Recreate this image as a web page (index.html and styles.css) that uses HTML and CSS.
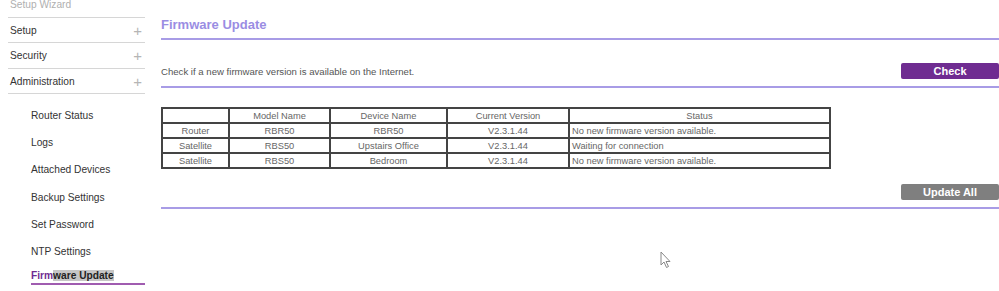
FILE: index.html
```html
<!DOCTYPE html>
<html lang="en">

<head>
    <meta charset="utf-8">
    <title>Firmware Update</title>
    <link rel="stylesheet" href="styles.css">
</head>

<body>
    <div class="side">
        <div class="menu wizard">Setup Wizard</div>
        <div class="menu">Setup <span class="plus">+</span></div>
        <div class="menu">Security <span class="plus">+</span></div>
        <div class="menu">Administration <span class="plus">+</span></div>
        <ul class="sub">
            <li>Router Status</li>
            <li>Logs</li>
            <li>Attached Devices</li>
            <li>Backup Settings</li>
            <li>Set Password</li>
            <li>NTP Settings</li>
            <li class="aktiv"><span class="lilla">Firm</span><span class="markeret">ware Update</span></li>
        </ul>
    </div>

    <div class="main">
        <h1>Firmware Update</h1>

        <div class="linje">
            <p>Check if a new firmware version is available on the Internet.</p>
            <button class="check">Check</button>
        </div>

        <table>
            <tr>
                <th class="k1"></th>
                <th class="k2">Model Name</th>
                <th class="k3">Device Name</th>
                <th class="k4">Current Version</th>
                <th>Status</th>
            </tr>
            <tr>
                <td>Router</td>
                <td>RBR50</td>
                <td>RBR50</td>
                <td>V2.3.1.44</td>
                <td class="status">No new firmware version available.</td>
            </tr>
            <tr>
                <td>Satellite</td>
                <td>RBS50</td>
                <td>Upstairs Office</td>
                <td>V2.3.1.44</td>
                <td class="status">Waiting for connection</td>
            </tr>
            <tr>
                <td>Satellite</td>
                <td>RBS50</td>
                <td>Bedroom</td>
                <td>V2.3.1.44</td>
                <td class="status">No new firmware version available.</td>
            </tr>
        </table>

        <div class="bund">
            <button class="opdater">Update All</button>
        </div>
    </div>

    <svg class="mus" width="12" height="18" viewBox="0 0 12 18">
        <path d="M1 1 L1 14 L4 11 L6.5 16.5 L8.5 15.5 L6 10.5 L10 10.5 Z" fill="#fff" stroke="#888" stroke-width="1"/>
    </svg>
</body>

</html>
```

FILE: styles.css
```css
* {
    box-sizing: border-box;
}

body {
    margin: 0;
    font-family: "Liberation Sans", Arial, sans-serif;
    background-color: white;
    display: flex;
    position: relative;
    height: 291px;
    overflow: hidden;
}

.side {
    width: 137px;
    margin-left: 8px;
    flex: none;
}

.menu {
    height: 25.5px;
    line-height: 25px;
    border-bottom: 1px solid #d6d6d6;
    font-size: 10.2px;
    color: #333;
    padding-left: 2px;
    display: flex;
    justify-content: space-between;
}

.menu.wizard {
    height: 17.5px;
    line-height: 10px;
    color: #b0b0b0;
}

.plus {
    color: #b5b5b5;
    font-size: 15px;
    font-weight: 300;
    padding-right: 3px;
}

.sub {
    list-style: none;
    margin: 7px 0 0 0;
    padding: 0 0 0 23px;
}

.sub li {
    font-size: 10.2px;
    color: #333;
    height: 27.2px;
    line-height: 29px;
}

.sub .aktiv {
    font-weight: bold;
    color: #222;
    height: 16px;
    line-height: 14px;
    margin-top: 5px;
    border-bottom: 2px solid #a05cb0;
}

.lilla {
    color: #6f2c91;
}

.markeret {
    background-color: #c6c6c6;
}

.main {
    flex: 1;
    margin-left: 16px;
}

h1 {
    margin: 0;
    padding-top: 17px;
    height: 40px;
    font-size: 13px;
    color: #9a8de3;
    border-bottom: 2px solid #a89ce6;
}

.linje {
    display: flex;
    justify-content: space-between;
    align-items: center;
    margin-top: 23px;
    padding-bottom: 7px;
    border-bottom: 2px solid #a89ce6;
}

.linje p {
    margin: 0;
    font-size: 9.6px;
    color: #555;
}

button {
    font-family: "Liberation Sans", Arial, sans-serif;
    font-weight: bold;
    font-size: 11px;
    color: white;
    border: none;
    border-radius: 2px;
    width: 98px;
    height: 16px;
    padding: 0;
}

.check {
    background-color: #6f2c91;
}

.opdater {
    background-color: #7f7f7f;
}

table {
    border-collapse: collapse;
    margin-top: 19px;
    width: 670px;
    border: 2px solid #444;
    font-size: 9.3px;
    color: #666;
}

th,
td {
    border: 2px solid #444;
    height: 15px;
    padding: 0 2px;
    text-align: center;
    font-weight: normal;
}

.k1 {
    width: 67px;
}

.k2 {
    width: 101px;
}

.k3 {
    width: 117px;
}

.k4 {
    width: 122px;
}

.status {
    text-align: left;
}

.bund {
    display: flex;
    justify-content: flex-end;
    margin-top: 15px;
    padding-bottom: 7px;
    border-bottom: 2px solid #a89ce6;
}

.mus {
    position: absolute;
    left: 660px;
    top: 251px;
}
```
